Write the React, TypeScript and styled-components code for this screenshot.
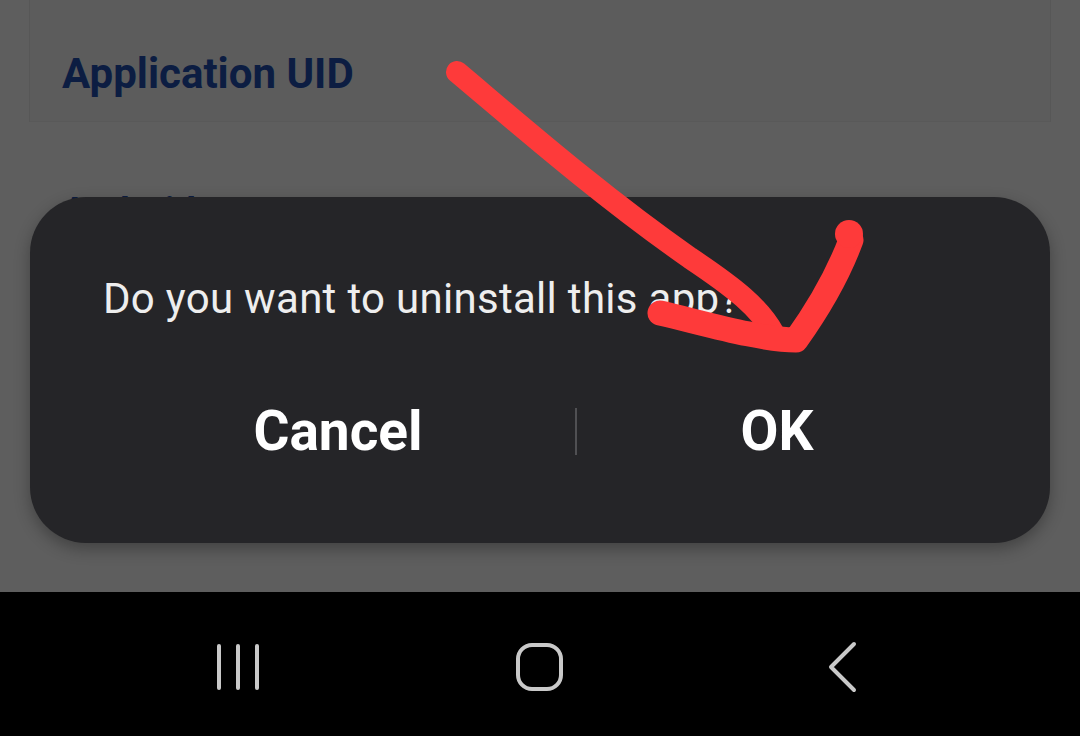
import React from "react";
import styled, { createGlobalStyle } from "styled-components";

const GlobalStyle = createGlobalStyle`
  html, body {
    margin: 0;
    padding: 0;
    background: #000;
    font-family: Roboto, "Noto Sans", Arial, sans-serif;
  }
`;

const Page = styled.div`
  position: relative;
  width: 1080px;
  height: 736px;
  display: flex;
  flex-direction: column;
  overflow: hidden;
`;

const Screen = styled.div`
  position: relative;
  flex: 1;
  background-color: #5e5e5e;
  overflow: hidden;
`;

const AppCard = styled.div`
  margin: 0 29px;
  height: 122px;
  box-sizing: border-box;
  padding: 50px 0 0 32px;
  background-color: #5c5c5c;
  border-left: 1px solid #575757;
  border-right: 1px solid #575757;
  border-bottom: 1px solid #595959;
`;

const CardTitle = styled.h1`
  margin: 0;
  font-family: Roboto, Arial, sans-serif;
  font-weight: 700;
  font-size: 42px;
  line-height: 48px;
  color: #0c1d42;
`;

const Section = styled.div`
  padding: 68px 0 0 62px;
`;

const SectionTitle = styled.h2`
  margin: 0;
  font-family: Roboto, Arial, sans-serif;
  font-weight: 700;
  font-size: 38px;
  line-height: 44px;
  color: #0c1d42;
`;

const Overlay = styled.div`
  position: absolute;
  inset: 0;
  display: flex;
  align-items: flex-end;
  padding: 0 30px 49px;
`;

const Dialog = styled.div`
  width: 100%;
  height: 346px;
  box-sizing: border-box;
  border-radius: 56px;
  background-color: #252528;
  box-shadow: 0 6px 16px rgba(0, 0, 0, 0.3);
  padding-top: 78px;
  display: flex;
  flex-direction: column;
`;

const Message = styled.p`
  margin: 0;
  padding-left: 73px;
  font-family: Roboto, Arial, sans-serif;
  font-size: 42px;
  letter-spacing: 0.3px;
  line-height: 48px;
  color: #eeeeee;
`;

const ButtonRow = styled.div`
  display: grid;
  grid-template-columns: 474px 2px 1fr;
  align-items: center;
  margin-top: 78px;
  padding: 0 73px 0 71px;
  height: 60px;
`;

const DialogButton = styled.button`
  background: none;
  border: none;
  padding: 0;
  font-family: Roboto, Arial, sans-serif;
  font-weight: 700;
  font-size: 55px;
  line-height: 60px;
  color: #ffffff;
  text-align: center;
`;

const Divider = styled.div`
  width: 2px;
  height: 47px;
  background-color: #505053;
`;

const NavBar = styled.div`
  height: 144px;
  background-color: #000;
  display: grid;
  grid-template-columns: 1fr 1fr 1fr;
  align-items: center;
  padding-top: 6px;
  box-sizing: border-box;
`;

const NavSlot = styled.div<{ $offset: number }>`
  display: flex;
  justify-content: center;
  transform: translateX(${(p) => p.$offset}px);
`;

const Scribble = styled.svg`
  position: absolute;
  inset: 0;
  pointer-events: none;
`;

export default function App() {
  return (
    <>
      <GlobalStyle />
      <Page>
        <Screen>
          <AppCard>
            <CardTitle>Application UID</CardTitle>
          </AppCard>
          <Section>
            <SectionTitle>Android</SectionTitle>
          </Section>
          <Overlay>
            <Dialog>
              <Message>Do you want to uninstall this app?</Message>
              <ButtonRow>
                <DialogButton>Cancel</DialogButton>
                <Divider />
                <DialogButton>OK</DialogButton>
              </ButtonRow>
            </Dialog>
          </Overlay>
        </Screen>
        <NavBar>
          <NavSlot $offset={58}>
            <svg width="46" height="50" viewBox="0 0 46 50">
              <g stroke="#c9c9c9" strokeWidth="4" strokeLinecap="round">
                <line x1="4" y1="4" x2="4" y2="46" />
                <line x1="23" y1="4" x2="23" y2="46" />
                <line x1="42" y1="4" x2="42" y2="46" />
              </g>
            </svg>
          </NavSlot>
          <NavSlot $offset={0}>
            <svg width="50" height="50" viewBox="0 0 50 50">
              <rect x="3" y="3" width="43" height="44" rx="14" fill="none" stroke="#c9c9c9" strokeWidth="4" />
            </svg>
          </NavSlot>
          <NavSlot $offset={-57}>
            <svg width="32" height="52" viewBox="0 0 32 52">
              <polyline points="27,3 4,26 27,49" fill="none" stroke="#c9c9c9" strokeWidth="4" strokeLinecap="round" strokeLinejoin="round" />
            </svg>
          </NavSlot>
        </NavBar>
        <Scribble width="1080" height="736" viewBox="0 0 1080 736">
          <g fill="none" stroke="#fe3a3a" strokeLinecap="round" strokeLinejoin="round">
            <path d="M457 72 C520 125, 600 195, 690 258 C735 288, 760 308, 774 334" strokeWidth="22" />
            <path d="M660 313 C700 322, 760 340, 796 340 C816 312, 838 275, 851 240" strokeWidth="25" />
          </g>
          <circle cx="849" cy="234" r="14" fill="#fe3a3a" />
        </Scribble>
      </Page>
    </>
  );
}
